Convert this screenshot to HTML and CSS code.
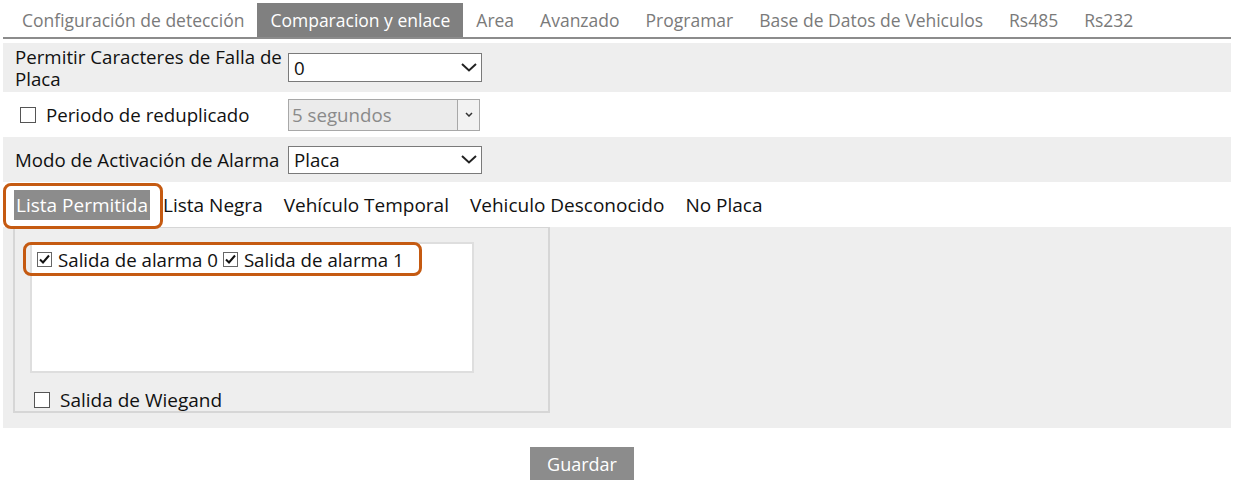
FILE: index.html
```html
<!DOCTYPE html>
<html lang="es">
<head>
  <meta charset="UTF-8">
  <meta name="viewport" content="width=device-width, initial-scale=1.0">
  <title>Comparacion y enlace</title>
  <link rel="stylesheet" href="styles.css">
</head>
<body>
  <div class="page">
    <ul class="tabs">
      <li>Configuración de detección</li>
      <li class="active">Comparacion y enlace</li>
      <li>Area</li>
      <li>Avanzado</li>
      <li>Programar</li>
      <li>Base de Datos de Vehiculos</li>
      <li>Rs485</li>
      <li>Rs232</li>
    </ul>

    <div class="row shade row-tall">
      <label class="label">Permitir Caracteres de Falla de Placa</label>
      <div class="select">
        <span>0</span>
        <svg class="chevron" width="16" height="9" viewBox="0 0 16 9"><path d="M1 1 L8 7.5 L15 1" fill="none" stroke="#222" stroke-width="2"/></svg>
      </div>
    </div>

    <div class="row">
      <label class="label check-label"><span class="box"></span>Periodo de reduplicado</label>
      <div class="select disabled">
        <span>5 segundos</span>
        <span class="arrow-box">
          <svg width="8" height="5" viewBox="0 0 8 5"><path d="M1 1 L4 4 L7 1" fill="none" stroke="#333" stroke-width="1.5"/></svg>
        </span>
      </div>
    </div>

    <div class="row shade">
      <label class="label">Modo de Activación de Alarma</label>
      <div class="select small">
        <span>Placa</span>
        <svg class="chevron" width="16" height="9" viewBox="0 0 16 9"><path d="M1 1 L8 7.5 L15 1" fill="none" stroke="#222" stroke-width="2"/></svg>
      </div>
    </div>

    <div class="row subtabs">
      <div class="mark mark-tab"><span class="subtab current">Lista Permitida</span></div>
      <span class="subtab">Lista Negra</span>
      <span class="subtab">Vehículo Temporal</span>
      <span class="subtab">Vehiculo Desconocido</span>
      <span class="subtab">No Placa</span>
    </div>

    <div class="row shade panel-row">
      <div class="panel">
        <div class="outputs">
          <div class="mark mark-outputs">
            <label class="check-label">
              <svg class="tick" width="15" height="15" viewBox="0 0 15 15"><rect x="0.5" y="0.5" width="14" height="14" fill="#fff" stroke="#666"/><path d="M3 7.5 L6 10.5 L12 3.5" fill="none" stroke="#111" stroke-width="2"/></svg>Salida de alarma 0
            </label>
            <label class="check-label">
              <svg class="tick" width="15" height="15" viewBox="0 0 15 15"><rect x="0.5" y="0.5" width="14" height="14" fill="#fff" stroke="#666"/><path d="M3 7.5 L6 10.5 L12 3.5" fill="none" stroke="#111" stroke-width="2"/></svg>Salida de alarma 1
            </label>
          </div>
        </div>
        <label class="check-label wiegand"><span class="box"></span>Salida de Wiegand</label>
      </div>
    </div>

    <div class="actions">
      <button class="button" type="button">Guardar</button>
    </div>
  </div>
</body>
</html>
```

FILE: styles.css
```css
body {
  margin: 0;
  padding: 3px 0 0;
  font-family: "Open Sans", "Noto Sans", sans-serif;
  font-size: 18.7px;
  color: #111;
  background: #fff;
}
.page {
  width: 1228px;
  margin-left: 3px;
}
.tabs {
  display: flex;
  list-style: none;
  margin: 0;
  padding: 0 0 0 6px;
  border-bottom: 2px solid #8c8c8c;
  font-size: 17.5px;
}
.tabs li {
  padding: 0 13px;
  line-height: 34px;
  color: #7a7a7a;
}
.tabs li.active {
  background: #808080;
  color: #fff;
}
.row {
  display: flex;
  align-items: center;
  height: 45px;
  padding-left: 12px;
}
.shade {
  background: #eeeeee;
}
.row-tall {
  height: 49px;
  margin-top: 4px;
}
.label {
  width: 273px;
  line-height: 22px;
}
.check-label {
  display: flex;
  align-items: center;
}
.label.check-label {
  width: 268px;
  margin-left: 5px;
}
.box {
  width: 14px;
  height: 14px;
  border: 1px solid #555;
  background: #fff;
  margin-right: 10px;
}
.select {
  width: 187px;
  height: 27px;
  border: 1px solid #7a7a7a;
  background: #fff;
  display: flex;
  align-items: center;
  justify-content: space-between;
  padding-left: 5px;
  box-sizing: content-box;
}
.select span:first-child {
  flex: 1;
}
.select .chevron {
  margin-right: 4px;
}
.select.small {
  height: 26px;
}
.select.disabled {
  height: 30px;
  width: 187px;
  border-color: #a8a8a8;
  background: #ebebeb;
  color: #8a8a8a;
  padding-left: 3px;
}
.arrow-box {
  width: 21px;
  height: 30px;
  border-left: 1px solid #a8a8a8;
  background: #f2f2f2;
  display: flex;
  align-items: center;
  justify-content: center;
}
.subtabs {
  padding-left: 0;
  gap: 21px;
  font-size: 19px;
}
.subtab {
  color: #111;
}
.subtab.current {
  display: inline-block;
  background: #8c8c8c;
  color: #fff;
  line-height: 30px;
  padding: 0 2px;
}
.mark {
  position: relative;
  z-index: 1;
  border: 3px solid #c55a11;
  border-radius: 8px;
}
.mark-tab {
  box-sizing: border-box;
  height: 46px;
  padding: 4px 10px 0 8px;
  margin-right: -21px;
  align-self: flex-start;
  margin-top: 1px;
}
.panel-row {
  height: auto;
  align-items: flex-start;
  padding: 0 0 15px 10px;
}
.panel {
  width: 537px;
  height: 186px;
  border: 2px solid #d6d6d6;
  border-top-width: 1px;
  box-sizing: border-box;
  padding: 14px 0 0 15px;
}
.outputs {
  width: 444px;
  height: 131px;
  border: 2px solid #dedede;
  background: #fff;
  box-sizing: border-box;
}
.mark-outputs {
  display: inline-flex;
  align-items: center;
  gap: 5px;
  height: 28px;
  padding: 0 15px 0 11px;
  margin: -2px 0 0 -9px;
}
.tick {
  margin-right: 6px;
}
.wiegand {
  margin: 14px 0 0 4px;
  font-size: 19px;
}
.actions {
  padding: 19px 0 0 527px;
}
.button {
  font-family: inherit;
  font-size: 18px;
  color: #fff;
  background: #8c8c8c;
  border: none;
  width: 104px;
  height: 33px;
  padding: 0;
}
```
